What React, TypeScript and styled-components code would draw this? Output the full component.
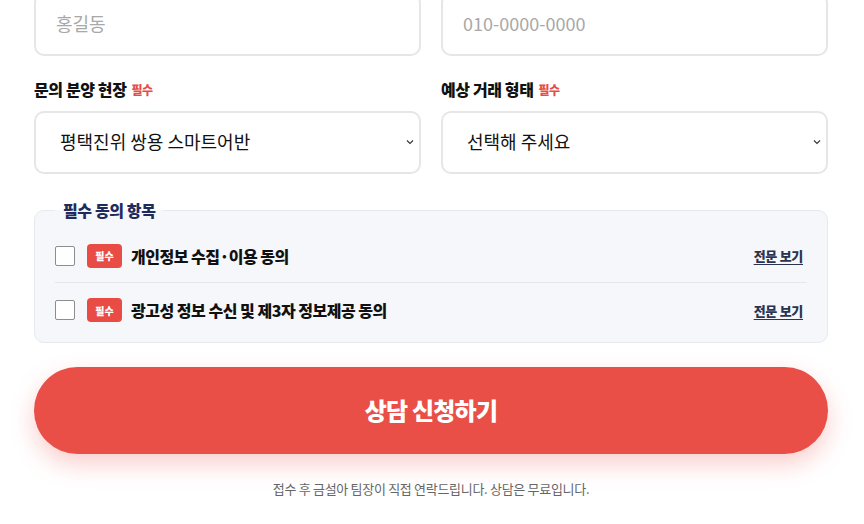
import styled, { createGlobalStyle } from 'styled-components';

const GlobalStyle = createGlobalStyle`
  html, body {
    margin: 0;
    padding: 0;
    background: #ffffff;
    overflow: hidden;
  }
  body {
    font-family: "Noto Sans CJK KR", "Noto Sans", sans-serif;
    color: #111111;
  }
`;

const Page = styled.form`
  width: 794px;
  margin: -7px 0 0 34px;
  display: flex;
  flex-direction: column;
`;

const FieldGrid = styled.div`
  display: grid;
  grid-template-columns: 1fr 1fr;
  column-gap: 20px;
  row-gap: 22px;
`;

const Field = styled.div`
  display: flex;
  flex-direction: column;
`;

const Label = styled.label`
  display: flex;
  align-items: center;
  gap: 5px;
  height: 22px;
  margin-bottom: 11px;
  font-size: 16px;
  font-weight: 800;
  letter-spacing: -0.4px;
  color: #111111;
`;

const Required = styled.span`
  font-size: 12px;
  font-weight: 800;
  color: #e84c44;
  padding-top: 1px;
`;

const TextInput = styled.input`
  box-sizing: border-box;
  height: 63px;
  width: 100%;
  padding: 0 20px 4px;
  border: 2px solid #e6e6e6;
  border-radius: 10px;
  font-family: inherit;
  font-size: 18px;
  color: #111111;
  background: #ffffff;
  outline: none;

  &::placeholder {
    color: #a8a8a8;
  }
`;

const SelectWrap = styled.div`
  position: relative;
`;

const Select = styled.select`
  box-sizing: border-box;
  appearance: none;
  height: 63px;
  width: 100%;
  padding: 0 24px 3px;
  border: 2px solid #e6e6e6;
  border-radius: 10px;
  font-family: inherit;
  font-size: 18px;
  color: #111111;
  background: #ffffff;
  outline: none;
`;

const Chevron = styled.svg`
  position: absolute;
  right: 7px;
  top: 28px;
  width: 8px;
  height: 6px;
  pointer-events: none;
`;

const Agreements = styled.fieldset`
  margin: 25px 0 0;
  padding: 8px 20px 5px;
  border: 1px solid #e6e9ef;
  border-radius: 10px;
  background: #f5f7fa;
`;

const Legend = styled.legend`
  padding: 0 8px;
  height: 22px;
  line-height: 22px;
  font-size: 16px;
  font-weight: 800;
  letter-spacing: -0.4px;
  color: #1f2b5c;
`;

const AgreeRow = styled.div<{ $last?: boolean }>`
  display: flex;
  align-items: center;
  height: 54px;
  box-sizing: border-box;
  border-bottom: ${({ $last }) => ($last ? 'none' : '1px solid #e4e7ec')};
`;

const Check = styled.span`
  box-sizing: border-box;
  width: 20px;
  height: 20px;
  border: 1px solid #8d8d8d;
  border-radius: 2px;
  background: #ffffff;
  flex-shrink: 0;
`;

const Badge = styled.span`
  display: inline-flex;
  align-items: center;
  justify-content: center;
  width: 35px;
  height: 24px;
  margin-left: 12px;
  border-radius: 4px;
  background: #e84c44;
  color: #ffffff;
  font-size: 10px;
  font-weight: 800;
`;

const AgreeText = styled.span`
  margin-left: 9px;
  font-size: 16px;
  font-weight: 800;
  letter-spacing: -0.5px;
  color: #111111;
  flex: 1;
`;

const ViewLink = styled.a`
  margin-right: 4px;
  font-size: 13px;
  font-weight: 800;
  letter-spacing: -0.3px;
  color: #2a3352;
  text-decoration: underline;
  text-underline-offset: 3px;
  cursor: pointer;
`;

const Submit = styled.button`
  margin-top: 24px;
  height: 87px;
  padding-bottom: 3px;
  border: none;
  border-radius: 44px;
  background: #e94e47;
  color: #ffffff;
  font-family: inherit;
  font-size: 24px;
  font-weight: 800;
  letter-spacing: -0.8px;
  box-shadow: 0 10px 24px rgba(233, 78, 71, 0.28);
  cursor: pointer;
`;

const Notice = styled.p`
  margin: 26px 0 0;
  text-align: center;
  font-size: 13px;
  line-height: 18px;
  letter-spacing: -0.3px;
  color: #666666;
`;

const agreements = ['개인정보 수집·이용 동의', '광고성 정보 수신 및 제3자 정보제공 동의'];

const ChevronIcon = () => (
  <Chevron viewBox="0 0 8 6">
    <path d="M1 1.5 L4 4.5 L7 1.5" fill="none" stroke="#333" strokeWidth="1.1" />
  </Chevron>
);

export default function App() {
  return (
    <>
      <GlobalStyle />
      <Page onSubmit={(e) => e.preventDefault()}>
        <FieldGrid>
          <Field>
            <TextInput placeholder="홍길동" aria-label="이름" />
          </Field>
          <Field>
            <TextInput placeholder="010-0000-0000" aria-label="연락처" />
          </Field>
          <Field>
            <Label>
              문의 분양 현장 <Required>필수</Required>
            </Label>
            <SelectWrap>
              <Select defaultValue="pt">
                <option value="pt">평택진위 쌍용 스마트어반</option>
              </Select>
              <ChevronIcon />
            </SelectWrap>
          </Field>
          <Field>
            <Label>
              예상 거래 형태 <Required>필수</Required>
            </Label>
            <SelectWrap>
              <Select defaultValue="">
                <option value="">선택해 주세요</option>
                <option value="buy">매매</option>
                <option value="rent">임대</option>
              </Select>
              <ChevronIcon />
            </SelectWrap>
          </Field>
        </FieldGrid>

        <Agreements>
          <Legend>필수 동의 항목</Legend>
          {agreements.map((text, i) => (
            <AgreeRow key={text} $last={i === agreements.length - 1}>
              <Check />
              <Badge>필수</Badge>
              <AgreeText>{text}</AgreeText>
              <ViewLink>전문 보기</ViewLink>
            </AgreeRow>
          ))}
        </Agreements>

        <Submit type="submit">상담 신청하기</Submit>
        <Notice>접수 후 금설아 팀장이 직접 연락드립니다. 상담은 무료입니다.</Notice>
      </Page>
    </>
  );
}
